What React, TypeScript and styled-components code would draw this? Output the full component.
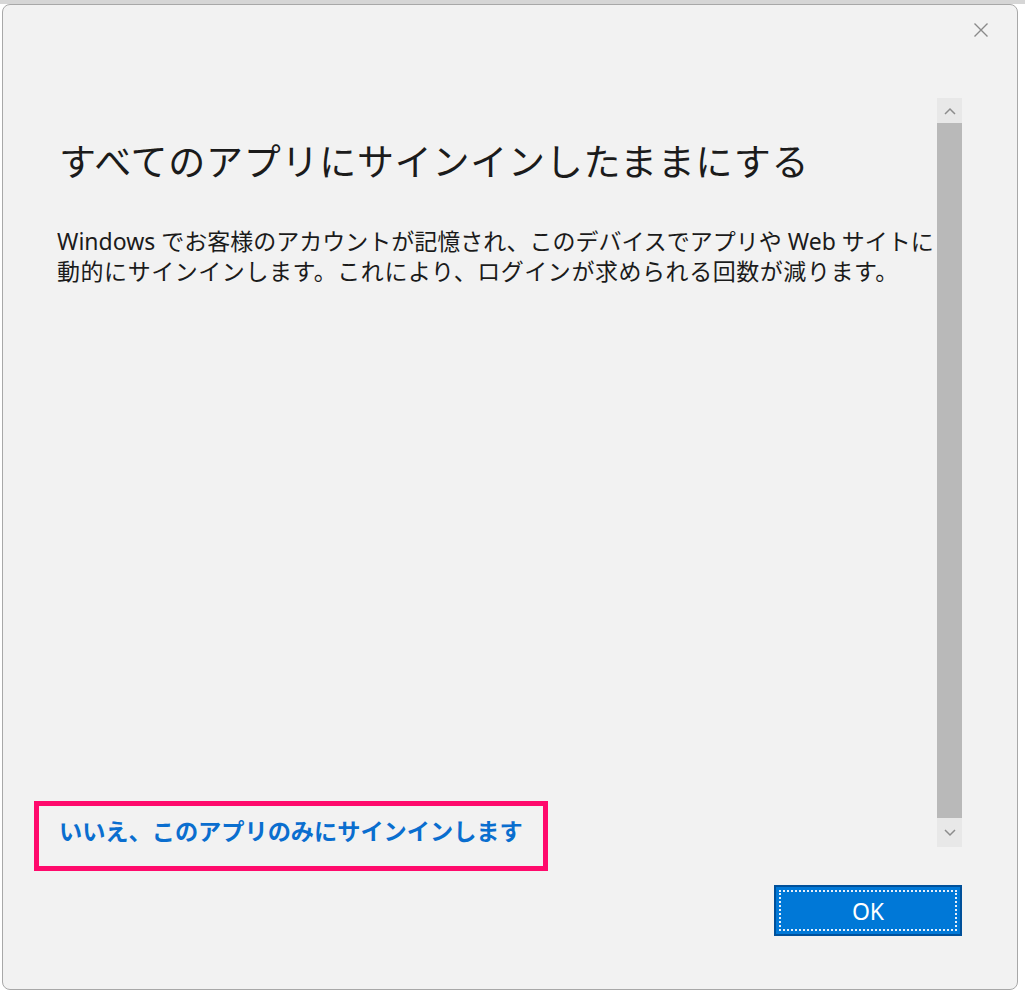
import React from "react";
import styled, { createGlobalStyle } from "styled-components";

const Global = createGlobalStyle`
  html, body { margin: 0; padding: 0; }
  body {
    background: #ffffff;
    font-family: "Noto Sans", "Noto Sans CJK JP", sans-serif;
  }
`;

const Screen = styled.div`
  width: 1025px;
  height: 993px;
  box-sizing: border-box;
  padding: 4px 7px 3px 2px;
  background: linear-gradient(#d6d6d6 0 4px, #ffffff 4px);
  overflow: hidden;
`;

const Dialog = styled.div`
  box-sizing: border-box;
  width: 1016px;
  height: 986px;
  background: #f2f2f2;
  border: 1px solid #a8a8a8;
  border-radius: 8px;
  display: flex;
  flex-direction: column;
`;

const Header = styled.div`
  height: 93px;
  display: flex;
  justify-content: flex-end;
  align-items: flex-start;
  padding: 13px 24px 0 0;
  box-sizing: border-box;
`;

const CloseButton = styled.button`
  width: 24px;
  height: 24px;
  padding: 0;
  border: none;
  background: transparent;
  display: flex;
  align-items: center;
  justify-content: center;
  cursor: pointer;
`;

const Main = styled.div`
  height: 749px;
  display: grid;
  grid-template-columns: 1fr 25px;
  margin-right: 55px;
`;

const Content = styled.div`
  display: flex;
  flex-direction: column;
  padding-left: 56px;
  min-width: 0;
`;

const Title = styled.h1`
  margin: 40px 0 0 0;
  font-family: "Noto Sans", "Noto Sans CJK JP", sans-serif;
  font-weight: 400;
  font-size: 37px;
  letter-spacing: 0.75px;
  line-height: 48px;
  color: #1b1b1b;
  white-space: nowrap;
`;

const Body = styled.p`
  margin: 40px 0 0 -2px;
  font-size: 23px;
  line-height: 30px;
  color: #1b1b1b;
  white-space: nowrap;
  overflow: hidden;
`;

const Line = styled.span<{ $spacing?: number }>`
  display: block;
  letter-spacing: ${(p) => p.$spacing ?? 0}px;
`;

const LinkWrap = styled.div`
  margin-top: auto;
  margin-bottom: 1px;
  position: relative;
  align-self: flex-start;
`;

const Link = styled.a`
  display: block;
  font-size: 23.2px;
  font-weight: 700;
  line-height: 30px;
  color: #0a6ecf;
  text-decoration: none;
  white-space: nowrap;
  cursor: pointer;
`;

const Highlight = styled.div`
  position: absolute;
  left: -25px;
  top: -15px;
  right: -25px;
  bottom: -25px;
  border: 5px solid #ff0a6c;
  pointer-events: none;
`;

const Scrollbar = styled.div`
  background: #e8e8e8;
  display: grid;
  grid-template-rows: 25px 1fr 29px;
`;

const Arrow = styled.div`
  display: flex;
  align-items: center;
  justify-content: center;
`;

const Thumb = styled.div`
  background: #b9b9b9;
`;

const Footer = styled.div`
  display: flex;
  justify-content: flex-end;
  padding: 38px 55px 0 0;
`;

const OkButton = styled.button`
  position: relative;
  width: 188px;
  height: 51px;
  box-sizing: border-box;
  background: #0078d7;
  border: 2px solid #00509a;
  color: #ffffff;
  font-family: "Noto Sans", sans-serif;
  font-size: 23px;
  padding: 0;
  cursor: pointer;
  &::after {
    content: "";
    position: absolute;
    inset: 3px;
    border: 2px dotted #e8f0fa;
  }
`;

export default function App() {
  return (
    <>
      <Global />
      <Screen>
        <Dialog>
          <Header>
            <CloseButton aria-label="閉じる">
              <svg width="16" height="16" viewBox="0 0 16 16">
                <path d="M1.5 1.5 L14.5 14.5 M14.5 1.5 L1.5 14.5" stroke="#8a8a8a" strokeWidth="1.4" fill="none" />
              </svg>
            </CloseButton>
          </Header>
          <Main>
            <Content>
              <Title>すべてのアプリにサインインしたままにする</Title>
              <Body>
                <Line>Windows でお客様のアカウントが記憶され、このデバイスでアプリや Web サイトに</Line>
                <Line $spacing={0.55}>動的にサインインします。これにより、ログインが求められる回数が減ります。</Line>
              </Body>
              <LinkWrap>
                <Link>いいえ、このアプリのみにサインインします</Link>
                <Highlight />
              </LinkWrap>
            </Content>
            <Scrollbar>
              <Arrow>
                <svg width="12" height="8" viewBox="0 0 12 8">
                  <path d="M1 7 L6 2 L11 7" stroke="#8c8c8c" strokeWidth="1.5" fill="none" />
                </svg>
              </Arrow>
              <Thumb />
              <Arrow>
                <svg width="12" height="8" viewBox="0 0 12 8">
                  <path d="M1 1 L6 6 L11 1" stroke="#8c8c8c" strokeWidth="1.5" fill="none" />
                </svg>
              </Arrow>
            </Scrollbar>
          </Main>
          <Footer>
            <OkButton>OK</OkButton>
          </Footer>
        </Dialog>
      </Screen>
    </>
  );
}
